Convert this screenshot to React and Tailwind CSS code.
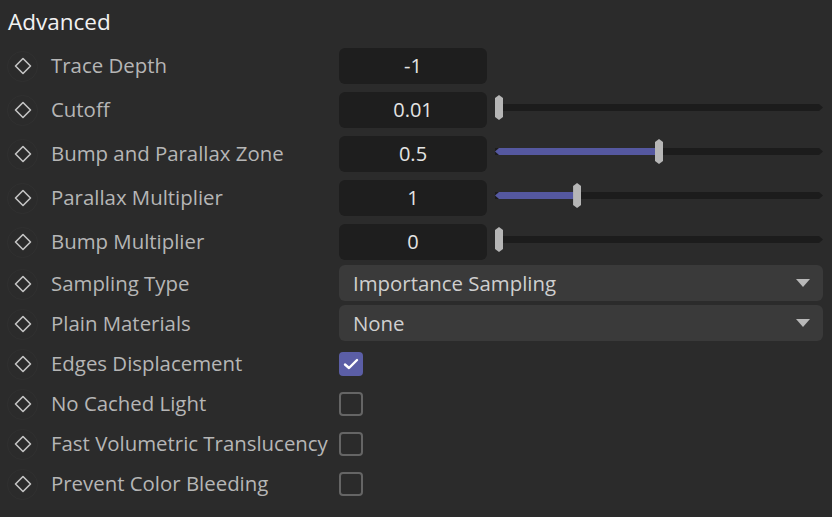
const font = { fontFamily: '"Open Sans", "Noto Sans", sans-serif' }

function Key() {
  return (
    <div className="w-[43px] flex items-center justify-center shrink-0">
      <div className="w-[31px] h-[31px] rounded-full border border-[#303030] flex items-center justify-center ml-[2px]">
        <svg width="18" height="18" viewBox="0 0 18 18">
          <path d="M9 1.5 L16.5 9 L9 16.5 L1.5 9 Z" fill="none" stroke="#c4c4c4" strokeWidth="1.6" strokeLinejoin="round" />
        </svg>
      </div>
    </div>
  )
}

function Label({ children }) {
  return <div className="w-[296px] shrink-0 text-[20.4px] text-[#b6b6b6] whitespace-nowrap pl-[8px] -mt-[1px]">{children}</div>
}

function Slider({ pos }) {
  const left = pos * 320
  return (
    <div className="relative w-[328px] h-[25px] mb-[5px]">
      <div className="absolute left-0 right-0 top-[9px] h-[7px] bg-[#1c1c1c] [clip-path:polygon(0_0,calc(100%-4px)_0,100%_50%,calc(100%-4px)_100%,0_100%)]" />
      {pos > 0 && (
        <div
          className="absolute left-0 top-[9px] h-[7px] bg-[#5558a0] [clip-path:polygon(4px_0,100%_0,100%_100%,4px_100%,0_50%)]"
          style={{ width: left + 4 }}
        />
      )}
      <div
        className="absolute top-0 w-[8px] h-[25px] bg-[#b6b6b6] [clip-path:polygon(50%_0,100%_3px,100%_calc(100%-3px),50%_100%,0_calc(100%-3px),0_3px)]"
        style={{ left }}
      />
    </div>
  )
}

function NumberRow({ label, value, pos }) {
  return (
    <div className="h-[44px] flex items-center">
      <Key />
      <Label>{label}</Label>
      <div className="w-[148px] h-[36px] rounded-[6px] bg-[#1e1e1e] flex items-center justify-center text-[20px] text-[#e4e4e4] mr-[8px]">
        {value}
      </div>
      {pos !== undefined && <Slider pos={pos} />}
    </div>
  )
}

function SelectRow({ label, value }) {
  return (
    <div className="h-[40px] flex items-center">
      <Key />
      <Label>{label}</Label>
      <div className="w-[484px] h-[36px] rounded-[6px] bg-[#3a3a3a] flex items-center justify-between pl-[14px] pr-[13px] text-[20.4px] text-[#cfcfcf] -mt-[2px]">
        <span>{value}</span>
        <svg width="14" height="8" viewBox="0 0 14 8">
          <path d="M0 0 H14 L7 8 Z" fill="#b8b8b8" />
        </svg>
      </div>
    </div>
  )
}

function CheckRow({ label, checked }) {
  return (
    <div className="h-[40px] flex items-center">
      <Key />
      <Label>{label}</Label>
      {checked ? (
        <div className="w-[24px] h-[24px] rounded-[4px] bg-[#5b5ea6] flex items-center justify-center -mt-[1px]">
          <svg width="16" height="14" viewBox="0 0 16 14">
            <path d="M2 7.5 L6 11 L14 3" fill="none" stroke="#ffffff" strokeWidth="2.4" strokeLinecap="round" strokeLinejoin="round" />
          </svg>
        </div>
      ) : (
        <div className="w-[24px] h-[24px] rounded-[4px] border-2 border-[#656565] -mt-[1px]" />
      )}
    </div>
  )
}

export default function App() {
  return (
    <div className="w-[832px] h-[517px] bg-[#2b2b2b] overflow-hidden" style={font}>
      <div className="pl-[8px] pt-[6px] h-[38px] leading-[32px] text-[22.5px] text-[#f2f2f2]">Advanced</div>
      <div className="mt-[6px] flex flex-col">
        <NumberRow label="Trace Depth" value="-1" />
        <NumberRow label="Cutoff" value="0.01" pos={0} />
        <NumberRow label="Bump and Parallax Zone" value="0.5" pos={0.5} />
        <NumberRow label="Parallax Multiplier" value="1" pos={0.244} />
        <NumberRow label="Bump Multiplier" value="0" pos={0} />
        <SelectRow label="Sampling Type" value="Importance Sampling" />
        <SelectRow label="Plain Materials" value="None" />
        <CheckRow label="Edges Displacement" checked />
        <CheckRow label="No Cached Light" />
        <CheckRow label="Fast Volumetric Translucency" />
        <CheckRow label="Prevent Color Bleeding" />
      </div>
    </div>
  )
}
